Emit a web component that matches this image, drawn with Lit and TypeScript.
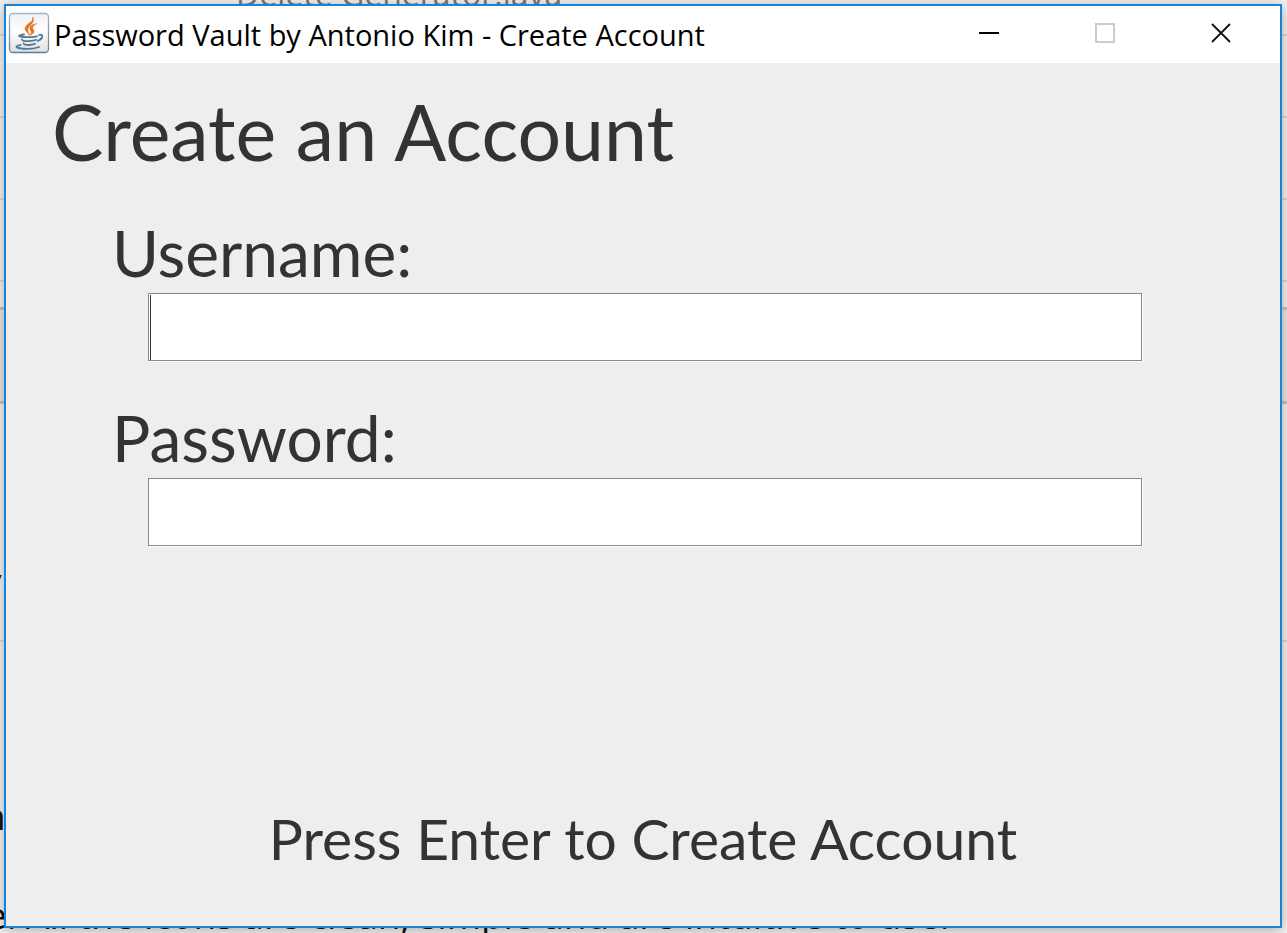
import { LitElement, html, css } from "lit";
import { customElement } from "lit/decorators.js";

@customElement("app-root")
export class AppRoot extends LitElement {
  static styles = css`
    :host {
      display: block;
      position: relative;
      box-sizing: border-box;
      height: 100vh;
      padding: 4px 5px 5px 4px;
      overflow: hidden;
      background: #f2f2f2;
      color: #333;
      font-family: Lato, sans-serif;
    }
    .page {
      position: absolute;
      inset: 0;
      overflow: hidden;
      color: #111;
      font-family: "Open Sans", sans-serif;
      font-size: 37px;
      line-height: 32px;
      white-space: nowrap;
    }
    .rule {
      position: absolute;
      left: 0;
      right: 0;
      height: 2px;
      background: #d8d8d8;
    }
    .rule.thick {
      height: 3px;
      background: #c4c4c4;
    }
    .band {
      position: absolute;
      left: 0;
      right: 0;
      top: 308px;
      height: 94px;
      background: #e6e6e6;
    }
    .text {
      position: absolute;
    }
    .file {
      left: 236px;
      top: -22px;
      color: #777;
      font-size: 32px;
    }
    .review {
      left: -14px;
      top: 899px;
    }
    .letter {
      left: -17px;
    }
    .window {
      position: relative;
      box-sizing: border-box;
      height: 100%;
      display: flex;
      flex-direction: column;
      border: 2px solid #1883d7;
      background: #eee;
      box-shadow: 0 2px 12px rgba(0, 0, 0, 0.3);
    }
    .titlebar {
      display: flex;
      align-items: center;
      height: 57px;
      padding: 0 1px 0 2px;
      background: #fff;
      color: #000;
    }
    .logo {
      width: 42px;
      height: 42px;
      margin: 0 4px 4px 0;
    }
    .caption {
      flex: 1;
      margin: 0;
      font: 400 29px/40px "Open Sans", sans-serif;
      white-space: nowrap;
    }
    .control {
      display: flex;
      align-items: center;
      justify-content: center;
      width: 116px;
      height: 53px;
      margin-bottom: 4px;
      padding: 0;
      border: 0;
      background: none;
    }
    .form {
      flex: 1;
      display: flex;
      flex-direction: column;
      padding: 24px 138px 52px 46px;
    }
    h1 {
      margin: 0 0 38px;
      font-size: 77px;
      font-weight: 400;
      line-height: 88px;
      white-space: nowrap;
    }
    .field {
      display: flex;
      flex-direction: column;
      margin: 0 0 37px 62px;
    }
    label {
      font-size: 64px;
      line-height: 80px;
      margin-left: -2px;
    }
    input {
      box-sizing: border-box;
      width: auto;
      height: 68px;
      margin: 0 0 0 34px;
      padding: 2px 8px;
      border: 1px solid #7a8a99;
      border-radius: 0;
      outline: 0;
      background: #fff;
      box-shadow: 1px 1px 0 #fff;
      color: #333;
      font: 400 48px/60px Lato, sans-serif;
    }
    .entry {
      position: relative;
      display: grid;
    }
    .caret {
      position: absolute;
      left: 36px;
      top: 2px;
      bottom: 1px;
      width: 1px;
      background: #333;
    }
    .submit {
      margin: auto -92px 0 0;
      padding: 0;
      border: 0;
      background: none;
      color: #333;
      font: 400 57px/72px Lato, sans-serif;
      text-align: center;
    }
  `;

  render() {
    return html`
      <div class="page" aria-hidden="true">
        <div class="band"></div>
        ${[34, 116, 198, 280, 640].map(
          (y) => html`<div class="rule" style="top:${y}px"></div>`
        )}
        ${[307, 401].map(
          (y) => html`<div class="rule thick" style="top:${y}px"></div>`
        )}
        <span class="text file">Delete Generator.java</span>
        ${[
          ["y", 565],
          ["r", 703],
          ["n", 800],
        ].map(
          ([letter, y]) =>
            html`<span class="text letter" style="top:${y}px">${letter}</span>`
        )}
        <span class="text review">e. All the icons are clean, simple and are intuitive to use.</span>
      </div>
      <main class="window">
        <header class="titlebar">
          <svg class="logo" viewBox="0 0 42 42" aria-hidden="true">
            <defs>
              <linearGradient id="tile" x2="0" y2="1">
                <stop offset="0" stop-color="#f0f0f0" />
                <stop offset="0.45" stop-color="#fff" />
                <stop offset="1" stop-color="#dedede" />
              </linearGradient>
              <linearGradient id="edge" x2="0" y2="1">
                <stop offset="0" stop-color="#a9b4bd" />
                <stop offset="1" stop-color="#5f7f99" />
              </linearGradient>
            </defs>
            <rect x="1.5" y="1.500" width="39" height="39" rx="3.500" fill="url(#tile)" stroke="url(#edge)" stroke-width="1.300" />
            <path d="M24.500 5C27 10 16.500 12 17 17C17.400 19.500 20.500 21 21.500 23.500C20.500 19 18.800 18 20.500 15.500C22.500 12.500 27.500 10 24.500 5Z" fill="#e8711c" stroke="#e8711c" stroke-width="0.600" />
            <path d="M29 11.500C22.500 12.500 20.500 15.500 22.500 18.500C24 20.500 23 21.500 22 23.500C26.500 21 27 19.500 25 17C24 15 26 13 29 11.500Z" fill="#e8711c" stroke="#e8711c" stroke-width="0.400" />
            <g fill="none" stroke="#537a96" stroke-linecap="round" stroke-width="1.800">
              <path d="M16 22.500Q9 23.500 12 24.500Q20 26 29 24.300" />
              <path d="M14 27.300Q14 29.300 20 29.200Q26 29 28 27.800" />
              <path d="M15.500 31.300Q16 33 20.500 33Q25 33 27 31.800" />
              <path d="M31 23Q35 22 34.200 25Q33.500 27.500 29.500 29" />
              <path d="M12.500 33Q5.500 34.500 10.500 36Q22 38.300 31 35" />
            </g>
          </svg>
          <h2 class="caption">Password Vault by Antonio Kim - Create Account</h2>
          <button class="control" aria-label="Minimize">
            <svg width="20" height="20"><path d="M0 10H20" stroke="#000" stroke-width="2" /></svg>
          </button>
          <button class="control" aria-label="Maximize" disabled>
            <svg width="20" height="20"><path d="M1 1H19V19H1Z" fill="none" stroke="#ccc" stroke-width="2" /></svg>
          </button>
          <button class="control" aria-label="Close">
            <svg width="20" height="20"><path d="M1 1L19 19M19 1L1 19" stroke="#111" stroke-width="1.800" /></svg>
          </button>
        </header>
        <form class="form" @submit=${(e: Event) => e.preventDefault()}>
          <h1>Create an Account</h1>
          <div class="field">
            <label for="username">Username:</label>
            <div class="entry">
              <input id="username" type="text" autocomplete="off" />
              <span class="caret"></span>
            </div>
          </div>
          <div class="field">
            <label for="password">Password:</label>
            <div class="entry">
              <input id="password" type="password" autocomplete="off" />
            </div>
          </div>
          <button class="submit" type="submit">Press Enter to Create Account</button>
        </form>
      </main>
    `;
  }
}
